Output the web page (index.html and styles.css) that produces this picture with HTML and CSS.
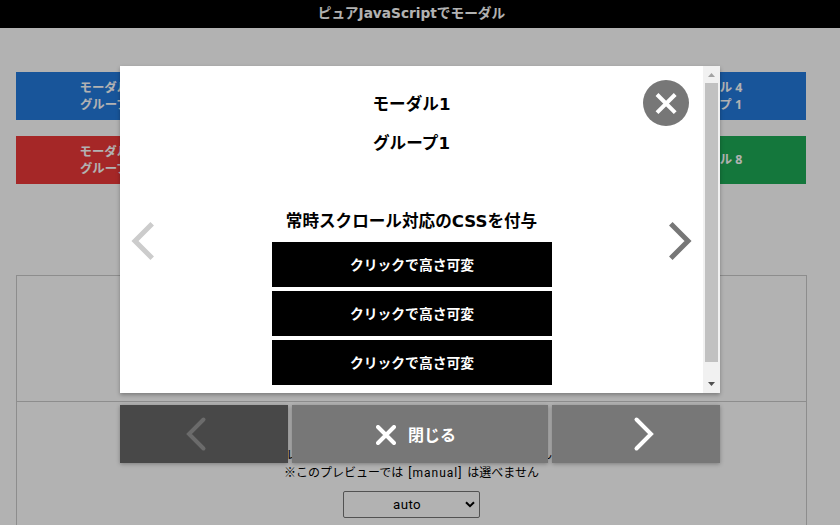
FILE: index.html
```
<!DOCTYPE html>
<html lang="ja">
<head>
<meta charset="utf-8">
<title>ピュアJavaScriptでモーダル</title>
<link rel="stylesheet" href="styles.css">
</head>
<body>
<div class="page">
  <header class="header"><h1 class="title"><span>ピュアJavaScriptでモーダル</span></h1></header>
  <main class="main">
    <div class="triggers">
      <button class="trigger blue">モーダル 1<br>グループ 1</button>
      <button class="trigger blue">モーダル 2<br>グループ 1</button>
      <button class="trigger blue">モーダル 3<br>グループ 1</button>
      <button class="trigger blue">モーダル 4<br>グループ 1</button>
      <button class="trigger red">モーダル 5<br>グループ 2</button>
      <button class="trigger red">モーダル 6<br>グループ 2</button>
      <button class="trigger red">モーダル 7<br>グループ 2</button>
      <button class="trigger green">モーダル 8</button>
    </div>
    <div class="options">
      <div class="option first"></div>
      <div class="option second">
        <p class="desc"><span>レ</span><span>ん</span></p>
        <p class="note">※このプレビューでは <span class="value">[manual]</span> は選べません</p>
        <div class="select"><span>auto</span><svg width="10" height="7" viewBox="0 0 10 7"><path d="M1 1.2 5 5.2 9 1.2"/></svg></div>
      </div>
    </div>
  </main>
</div>
<div class="overlay">
  <section class="modal">
    <div class="content">
      <p class="line">モーダル1</p>
      <p class="line">グループ1</p>
      <p class="line gap">常時スクロール対応のCSSを付与</p>
      <div class="resizers">
        <button class="resize">クリックで高さ可変</button>
        <button class="resize">クリックで高さ可変</button>
        <button class="resize">クリックで高さ可変</button>
      </div>
    </div>
    <div class="scrollbar">
      <svg width="17" height="17"><path d="M5 11h7L8.5 7z" fill="#a3a3a3"/></svg>
      <div class="thumb"></div>
      <svg width="17" height="17"><path d="M5 6h7L8.5 10z" fill="#505050"/></svg>
    </div>
    <button class="close" aria-label="閉じる"><svg width="46" height="46"><path d="M14 14.5 32.2 32.7M32.2 14.5 14 32.7"/></svg></button>
    <svg class="arrow prev" width="24" height="40"><path d="M21.2 2.8 4 20 21.2 37.2"/></svg>
    <svg class="arrow next" width="24" height="40"><path d="M2.8 2.8 20 20 2.8 37.2"/></svg>
  </section>
  <nav class="controls">
    <button class="control disabled" aria-label="前へ"><svg width="22" height="36"><path d="M18.5 3.5 4 18 18.5 32.5"/></svg></button>
    <button class="control center"><svg width="20" height="20"><path d="M2 2 18 18M18 2 2 18"/></svg><span>閉じる</span></button>
    <button class="control forward" aria-label="次へ"><svg width="22" height="36"><path d="M3.5 3.5 18 18 3.5 32.5"/></svg></button>
  </nav>
</div>
</body>
</html>
```
FILE: styles.css
```
* { box-sizing: border-box; }
html { height: 100%; overflow: hidden; background: #fff; }
body { margin: 0; height: 525px; overflow: hidden; color: #000; font-family: "DejaVu Sans", "Noto Sans CJK JP", sans-serif; }
p, h1 { margin: 0; }
button { border: 0; padding: 0; margin: 0; font-family: inherit; font-weight: 700; }
svg { display: block; flex: none; fill: none; }
.page { height: 525px; overflow: hidden; }
.header { height: 28px; padding-right: 17px; background: #000; }
.title { color: #fff; font-size: 13.7px; line-height: 27px; text-align: center; }
.main { width: 823px; padding: 44px 17px 0 16px; }
.triggers { display: grid; grid-template-columns: repeat(4, 1fr); grid-auto-rows: 48px; column-gap: 14px; row-gap: 16px; }
.trigger { padding-bottom: 1px; color: #fff; font-size: 12.4px; line-height: 17px; font-family: "Noto Sans", "Noto Sans CJK JP", sans-serif; }
.blue { background: #237add; }
.red { background: #ed3939; }
.green { background: #1eab56; }
.options { width: 791px; margin-top: 91px; border: 1px solid #cacaca; }
.option { display: flex; flex-direction: column; align-items: center; }
.first { height: 126px; border-bottom: 1px solid #cacaca; }
.second { height: 200px; padding-top: 45px; }
.desc, .note { font: 12px/17px Roboto, "Noto Sans CJK JP", sans-serif; white-space: nowrap; }
.desc { display: flex; justify-content: space-between; width: 266px; margin-left: 15px; }
.note { height: 18px; padding-top: 1px; }
.value { margin: 0 2px; letter-spacing: 1px; }
.select { display: flex; align-items: center; justify-content: flex-end; gap: 44px; width: 137px; height: 27px; margin-top: 9px; padding: 0 4px 1px 0; border: 1px solid #767676; border-radius: 2px; font: 13.3px Roboto, sans-serif; letter-spacing: .4px; }
.select svg { stroke: #000; stroke-width: 2; }
.overlay { position: absolute; inset: 0; padding-top: 66px; background: rgba(0,0,0,.3); }
.modal { position: relative; display: flex; width: 600px; height: 327px; margin: 0 auto; background: #fff; box-shadow: 0 2px 4px rgba(0,0,0,.3); }
.content { width: 583px; padding-top: 19px; text-align: center; }
.line { font-size: 16.6px; font-weight: 700; line-height: 39px; }
.gap { margin-top: 39px; }
.resizers { display: flex; flex-direction: column; align-items: center; gap: 4px; margin-top: 1px; padding-left: 1px; }
.resize { width: 280px; height: 45px; padding-bottom: 1px; background: #000; color: #fff; font-size: 13.8px; }
.scrollbar { display: flex; flex-direction: column; justify-content: space-between; width: 17px; background: #f1f1f1; }
.thumb { width: 13px; height: 279px; margin: 0 2px auto; background: #c1c1c1; }
.close { position: absolute; top: 14px; right: 31px; width: 46px; height: 46px; border-radius: 50%; background: #777; }
.close path { stroke: #fff; stroke-width: 4; }
.arrow { position: absolute; top: 155px; }
.arrow path { stroke-width: 5; }
.prev { left: 11px; stroke: #ccc; }
.next { left: 548px; stroke: #777; }
.controls { display: grid; grid-template-columns: 168px 256px 168px; gap: 4px; width: 600px; height: 58px; margin: 12px auto 0; }
.control { display: flex; align-items: center; justify-content: center; background: #777; color: #fff; box-shadow: 0 1px 4px rgba(0,0,0,.3); }
.control path { stroke: #fff; stroke-width: 4; stroke-linecap: round; }
.disabled { padding-right: 16px; background: #484848; }
.disabled path { stroke: #6b6b6b; }
.forward { padding-left: 16px; }
.center { gap: 12px; padding: 2px 8px 0 0; font-size: 16px; }
.center span { padding-bottom: 3px; }
```
